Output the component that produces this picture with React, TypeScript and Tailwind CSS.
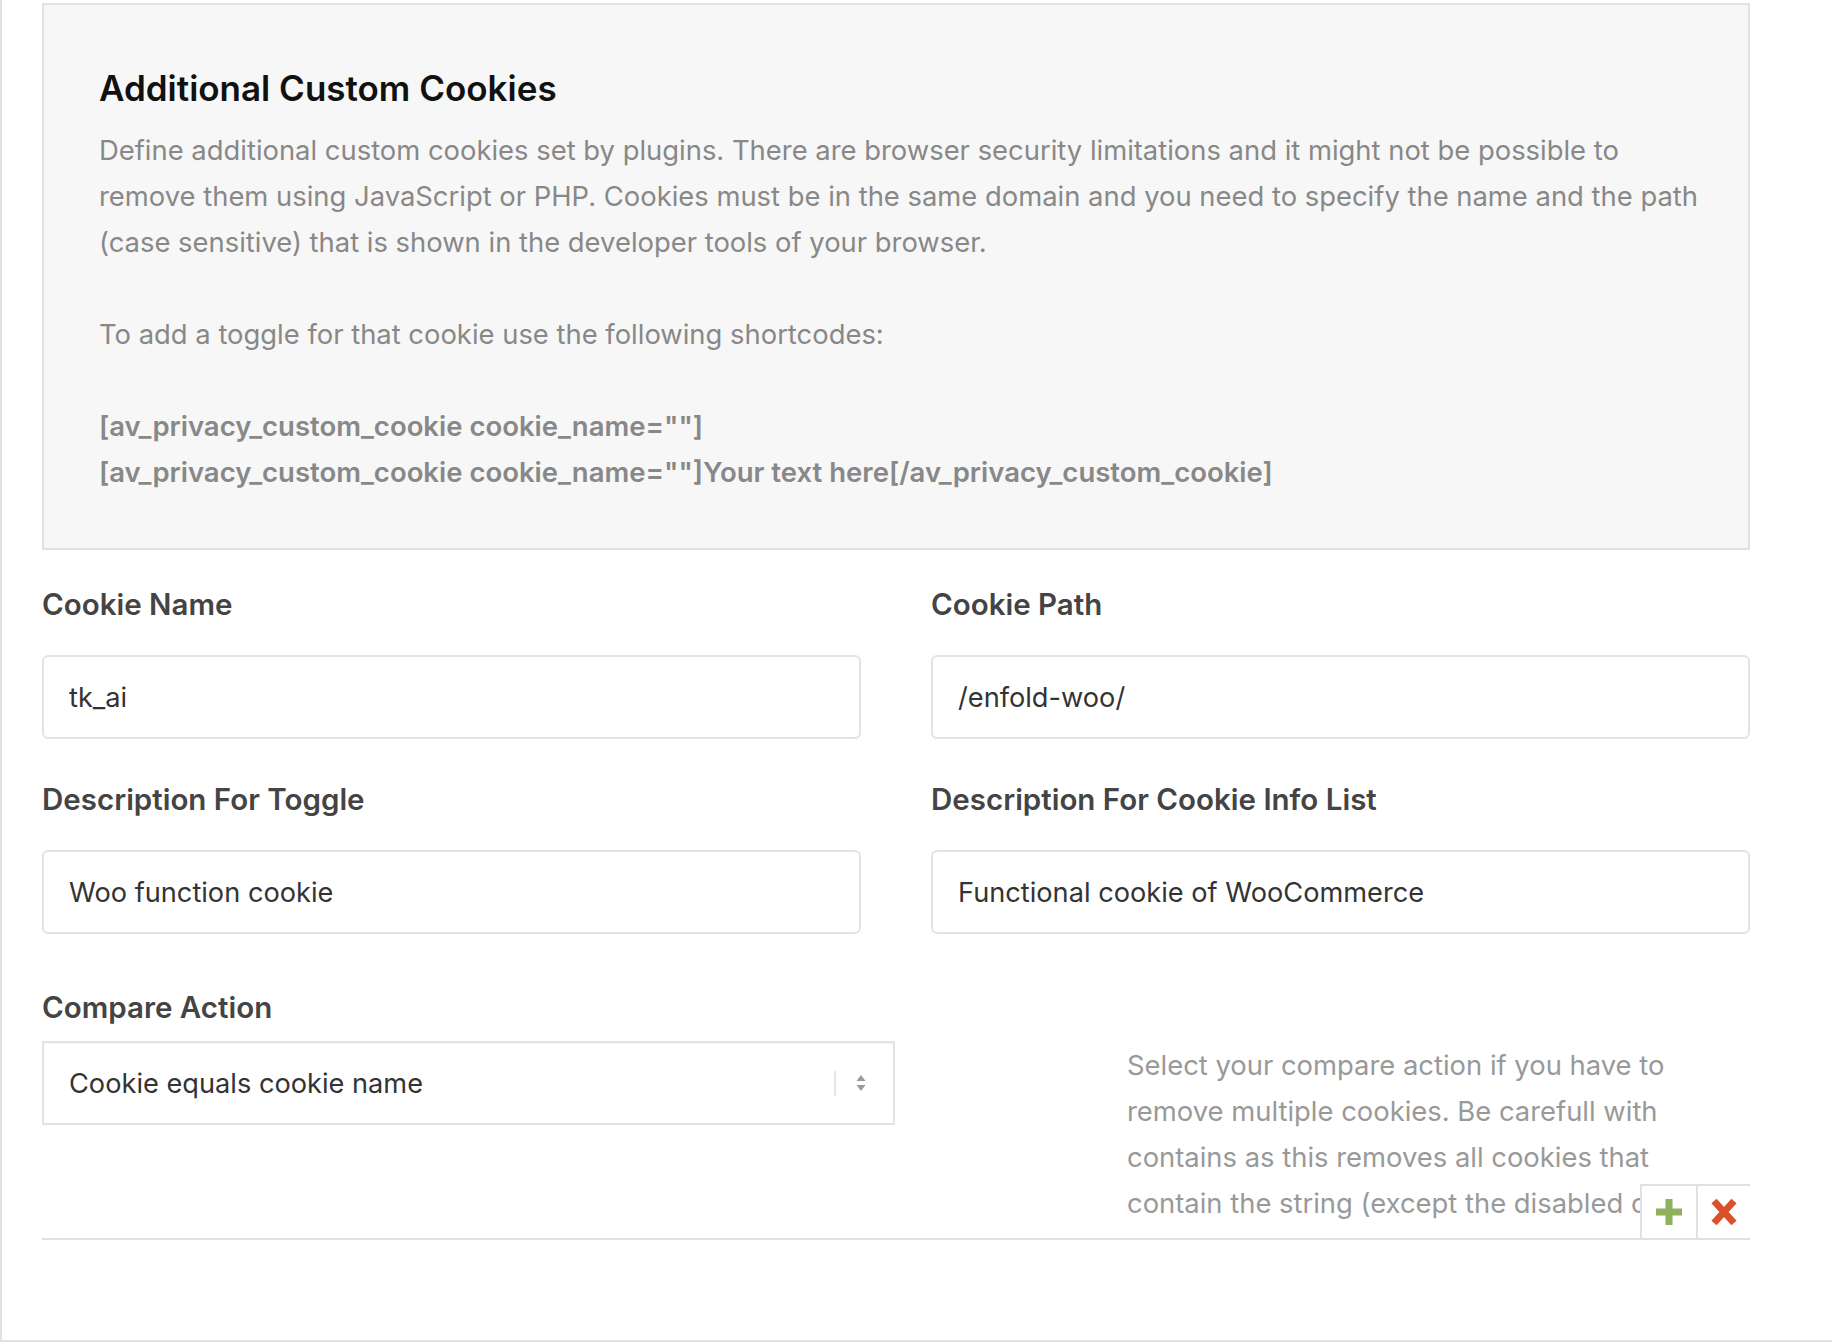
import React from 'react';

function Field({ label, value }: { label: string; value: string }) {
  return (
    <div className="flex flex-col">
      <label className="text-[29.5px] leading-[36px] font-semibold text-[#444]">{label}</label>
      <div className="mt-[33px] flex h-[84px] items-center rounded-[6px] border-2 border-[#e3e3e3] bg-white px-[25px] pt-[3px] text-[27.2px] text-[#333]">
        {value}
      </div>
    </div>
  );
}

function SelectArrows() {
  return (
    <svg width="12" height="22" viewBox="0 0 12 22" className="text-[#9a9a9a]">
      <path d="M6 3 L10.5 9 L1.5 9 Z" fill="currentColor" />
      <path d="M6 19 L10.5 13 L1.5 13 Z" fill="currentColor" />
    </svg>
  );
}

function PlusIcon() {
  return (
    <svg width="28" height="28" viewBox="0 0 28 28">
      <rect x="10.5" y="1" width="7" height="26" fill="#8fb05c" />
      <rect x="1" y="10.5" width="26" height="7" fill="#8fb05c" />
    </svg>
  );
}

function CrossIcon() {
  return (
    <svg width="28" height="28" viewBox="0 0 28 28">
      <path d="M4 3 L24 25 M24 3 L4 25" stroke="#d9502a" strokeWidth="7" strokeLinecap="butt" />
    </svg>
  );
}

export default function App() {
  return (
    <div className="h-[1342px] w-full overflow-hidden bg-white font-['Inter','Liberation_Sans',sans-serif]">
      <div className="h-[1342px] border-b-2 border-l-2 border-[#e1e1e1] pl-[40px] pt-[3px]">
        <div className="w-[1708px]">
          <section className="border-2 border-[#e1e1e1] bg-[#f7f7f7] pb-[53px] pl-[55px] pr-[20px] pt-[63px]">
            <h2 className="mb-[19px] text-[35px] leading-[40px] font-semibold text-[#111]">Additional Custom Cookies</h2>
            <div className="text-[27.4px] leading-[46px] text-[#888]">
              <p className="whitespace-nowrap">
                Define additional custom cookies set by plugins. There are browser security limitations and it might not be possible to
                <br />
                remove them using JavaScript or PHP. Cookies must be in the same domain and you need to specify the name and the path
                <br />
                (case sensitive) that is shown in the developer tools of your browser.
              </p>
              <p className="mt-[46px]">To add a toggle for that cookie use the following shortcodes:</p>
              <p className="mt-[46px] whitespace-nowrap text-[27.5px] font-semibold">
                [av_privacy_custom_cookie cookie_name=""]
                <br />
                [av_privacy_custom_cookie cookie_name=""]Your text here[/av_privacy_custom_cookie]
              </p>
            </div>
          </section>

          <div className="mt-[36px] grid grid-cols-2 gap-x-[70px] gap-y-[42px]">
            <Field label="Cookie Name" value="tk_ai" />
            <Field label="Cookie Path" value="/enfold-woo/" />
            <Field label="Description For Toggle" value="Woo function cookie" />
            <Field label="Description For Cookie Info List" value="Functional cookie of WooCommerce" />
          </div>

          <div className="relative mt-[55px] flex justify-between border-b-2 border-[#e1e1e1]">
            <div className="flex w-[853px] flex-col">
              <label className="text-[29.5px] leading-[36px] font-semibold text-[#444]">Compare Action</label>
              <div className="mt-[16px] flex h-[84px] items-center border-2 border-[#e3e3e3] bg-white pl-[25px] pr-[26px] text-[27.2px] text-[#333] shadow-[inset_0_1px_2px_rgba(0,0,0,0.04)]">
                <span className="flex-1 pt-[2px]">Cookie equals cookie name</span>
                <span className="h-[25px] w-[2px] bg-[#e6e6e6]" />
                <span className="ml-[19px] flex items-center">
                  <SelectArrows />
                </span>
              </div>
            </div>
            <div className="h-[249px] w-[623px] overflow-hidden pt-[53px] text-[27.4px] leading-[46px] text-[#999]">
              <p className="whitespace-nowrap">
                Select your compare action if you have to
                <br />
                remove multiple cookies. Be carefull with
                <br />
                contains as this removes all cookies that
                <br />
                contain the string (except the disabled cookies).
              </p>
            </div>
            <div className="absolute bottom-0 right-0 flex">
              <button className="flex h-[54px] w-[56px] items-center justify-center border-l-2 border-t-2 border-[#e1e1e1] bg-white">
                <PlusIcon />
              </button>
              <button className="flex h-[54px] w-[54px] items-center justify-center border-l-2 border-t-2 border-[#e1e1e1] bg-white">
                <CrossIcon />
              </button>
            </div>
          </div>
        </div>
      </div>
    </div>
  );
}
